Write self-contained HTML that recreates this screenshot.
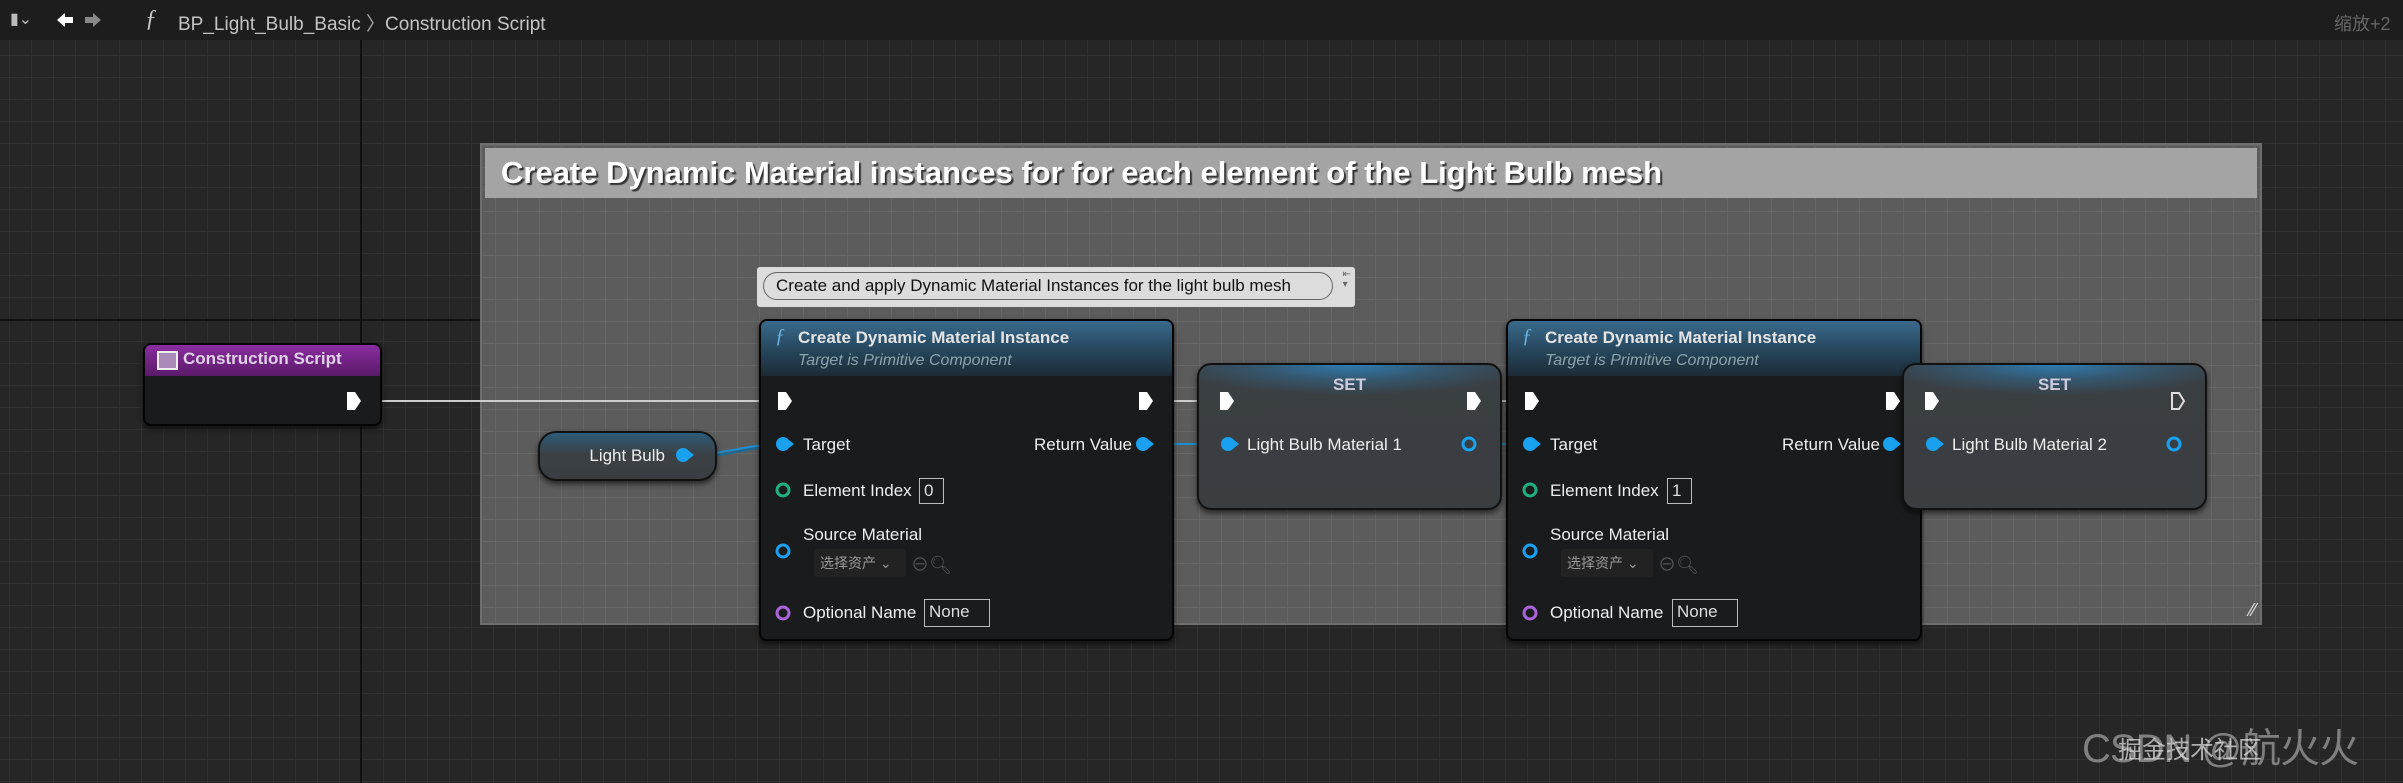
<!DOCTYPE html>
<html><head><meta charset="utf-8"><style>
*{margin:0;padding:0;box-sizing:border-box}
body{width:2403px;height:783px;overflow:hidden;position:relative;font-family:"Liberation Sans","Noto Sans CJK SC",sans-serif;
background-color:#262626;
background-image:linear-gradient(90deg,#303030 1px,transparent 1px),linear-gradient(#303030 1px,transparent 1px);
background-size:22px 22px;background-position:9px 11px}
.abs{position:absolute}
.tb{left:0;top:0;width:2403px;height:40px;background:#1d1d1d;color:#c4c4c4;font-size:19px}
.cm{left:480px;top:143px;width:1782px;height:482px;background-color:#5c5c5c;border:2px solid #6e6e6e;
background-image:linear-gradient(90deg,#666 1px,transparent 1px),linear-gradient(#666 1px,transparent 1px);
background-size:22px 22px;background-position:13px 0}
.cmt{left:3px;top:3px;right:3px;height:50px;background:#a4a4a4;color:#fff;font-weight:bold;font-size:31px;line-height:50px;padding-left:16px;text-shadow:2px 2px 1px #333}
.node{background:#1a1b1c;border:2px solid #050505;border-radius:8px;box-shadow:0 3px 6px rgba(0,0,0,.6);color:#eee;font-size:17px}
.hdr{position:absolute;left:0;top:0;right:0;height:55px;border-radius:6px 6px 0 0;background:linear-gradient(180deg,#3a6a8c 0%,#27485f 50%,#1d2b35 100%)}
.t{position:absolute;white-space:nowrap}
.box{position:absolute;border:1.5px solid #bbb;color:#ddd;font-size:17px;padding-left:4px;line-height:24px}
.set{background:radial-gradient(ellipse 60% 30px at 50% 0,#2e7bb0 0%,rgba(46,123,176,.4) 50%,transparent 100%),linear-gradient(180deg,#3a3f43,#3a3e41);border:2px solid #111;border-radius:14px;box-shadow:0 3px 6px rgba(0,0,0,.6);color:#eee;font-size:17px}
</style></head><body>
<div class="abs tb">
 <div class="t" style="left:10px;top:9px;color:#bbb;font-size:16px">▮⌄</div>
 <svg class="abs" style="left:55px;top:10px" width="90" height="20">
  <path d="M2 10 L10 3 V7 H18 V13 H10 V17 Z" fill="#fff"/>
  <path d="M46 10 L38 3 V7 H30 V13 H38 V17 Z" fill="#888"/>
 </svg>
 <div class="t" style="left:145px;top:6px;font-style:italic;font-family:'Liberation Serif',serif;font-size:24px">ƒ</div>
 <div class="t" style="left:178px;top:9px">BP_Light_Bulb_Basic <span style="color:#aaa">〉</span>Construction Script</div>
 <div class="t" style="left:2334px;top:10px;color:#666;font-size:18px">缩放+2</div>
</div>
<div class="abs" style="left:0;top:319px;width:2403px;height:2px;background:#111"></div>
<div class="abs" style="left:360px;top:40px;width:2px;height:743px;background:#111"></div>

<div class="abs cm"><div class="abs cmt">Create Dynamic Material instances for for each element of the Light Bulb mesh</div>
<div class="t" style="right:4px;bottom:2px;color:#ddd;font-size:18px">⁄⁄</div></div>

<svg class="abs" style="left:0;top:0" width="2403" height="783">
<g fill="none" stroke-width="2">
<path d="M360 401 H783" stroke="#ccc"/>
<path d="M1150 401 H1226 M1478 401 H1530" stroke="#ccc"/>
<path d="M690 455 C720 455 750 444 783 444" stroke="#1a8fd0"/>
<path d="M690 458 C720 458 750 446 783 446" stroke="#156a9a"/>
<path d="M1150 444 H1228 M1476 444 H1530 M1888 444 H1908" stroke="#1a8fd0"/>
</g></svg>

<div class="abs node" style="left:143px;top:343px;width:239px;height:83px">
 <div style="position:absolute;left:0;top:0;right:0;height:31px;border-radius:6px 6px 0 0;background:linear-gradient(180deg,#8a2ea0,#5a1a68)"></div>
 <div style="position:absolute;left:12px;top:6px;width:21px;height:19px;background:#aa8ab8;border:2px solid #eee"></div>
 <div class="t" style="left:38px;top:4px;font-weight:bold;font-size:17px;color:#e0d0e8">Construction Script</div>
</div>

<div class="abs set" style="left:538px;top:431px;width:179px;height:50px;border-radius:18px;background:linear-gradient(180deg,#2e5c7a,#3a4145 45%,#3a3e41)">
 <div class="t" style="right:50px;top:13px">Light Bulb</div>
</div>

<div class="abs" style="left:757px;top:267px;width:598px;height:40px;background:#dcdcdc;border-radius:3px">
 <div class="t" style="left:6px;top:5px;height:28px;width:570px;border:1.5px solid #666;border-radius:14px;color:#111;font-size:17px;line-height:25px;padding-left:12px">Create and apply Dynamic Material Instances for the light bulb mesh</div>
 <div class="t" style="right:4px;top:3px;color:#666;font-size:10px;line-height:10px">⇤<br>▾</div>
</div>

<!-- CDMI 1 -->
<div class="abs node" style="left:759px;top:319px;width:415px;height:322px">
 <div class="hdr"></div>
 <div class="t" style="left:14px;top:4px;color:#6ab0e0;font-style:italic;font-family:'Liberation Serif',serif;font-size:20px">ƒ</div>
 <div class="t" style="left:37px;top:7px;font-weight:bold;font-size:17px;color:#e4e4e4">Create Dynamic Material Instance</div>
 <div class="t" style="left:37px;top:31px;font-style:italic;font-size:16px;color:#8aa3ab">Target is Primitive Component</div>
 <div class="t" style="left:42px;top:114px">Target</div>
 <div class="t" style="right:40px;top:114px">Return Value</div>
 <div class="t" style="left:42px;top:160px">Element Index</div>
 <div class="box" style="left:158px;top:157px;width:25px;height:26px">0</div>
 <div class="t" style="left:42px;top:204px">Source Material</div>
 <div class="t" style="left:53px;top:228px;width:92px;height:28px;background:#222;border-radius:3px;color:#999;font-size:14px;line-height:28px;padding-left:6px">选择资产 ⌄</div>
 <div class="t" style="left:150px;top:230px;color:#555;font-size:18px">⊖🔍︎</div>
 <div class="t" style="left:42px;top:282px">Optional Name</div>
 <div class="box" style="left:163px;top:278px;width:66px;height:28px">None</div>
</div>

<!-- CDMI 2 -->
<div class="abs node" style="left:1506px;top:319px;width:416px;height:322px">
 <div class="hdr"></div>
 <div class="t" style="left:14px;top:4px;color:#6ab0e0;font-style:italic;font-family:'Liberation Serif',serif;font-size:20px">ƒ</div>
 <div class="t" style="left:37px;top:7px;font-weight:bold;font-size:17px;color:#e4e4e4">Create Dynamic Material Instance</div>
 <div class="t" style="left:37px;top:31px;font-style:italic;font-size:16px;color:#8aa3ab">Target is Primitive Component</div>
 <div class="t" style="left:42px;top:114px">Target</div>
 <div class="t" style="right:40px;top:114px">Return Value</div>
 <div class="t" style="left:42px;top:160px">Element Index</div>
 <div class="box" style="left:159px;top:157px;width:25px;height:26px">1</div>
 <div class="t" style="left:42px;top:204px">Source Material</div>
 <div class="t" style="left:53px;top:228px;width:92px;height:28px;background:#222;border-radius:3px;color:#999;font-size:14px;line-height:28px;padding-left:6px">选择资产 ⌄</div>
 <div class="t" style="left:150px;top:230px;color:#555;font-size:18px">⊖🔍︎</div>
 <div class="t" style="left:42px;top:282px">Optional Name</div>
 <div class="box" style="left:164px;top:278px;width:66px;height:28px">None</div>
</div>

<div class="abs set" style="left:1197px;top:363px;width:305px;height:147px">
 <div class="t" style="left:0;right:0;top:10px;text-align:center;font-weight:bold;color:#ccd">SET</div>
 <div class="t" style="left:48px;top:70px">Light Bulb Material 1</div>
</div>
<div class="abs set" style="left:1902px;top:363px;width:305px;height:147px">
 <div class="t" style="left:0;right:0;top:10px;text-align:center;font-weight:bold;color:#ccd">SET</div>
 <div class="t" style="left:48px;top:70px">Light Bulb Material 2</div>
</div>

<svg class="abs" style="left:0;top:0" width="2403" height="783">
<defs>
<g id="ex"><path d="M-7 -9 H1 L7 0 L1 9 H-7 Z" fill="#fff"/></g>
<g id="exo"><path d="M-6 -8 H1 L6 0 L1 8 H-6 Z" fill="none" stroke="#ddd" stroke-width="2"/></g>
</defs>
<use href="#ex" x="354" y="401"/>
<use href="#ex" x="785" y="401"/><use href="#ex" x="1146" y="401"/>
<use href="#ex" x="1532" y="401"/><use href="#ex" x="1893" y="401"/>
<use href="#ex" x="1227" y="401"/><use href="#ex" x="1474" y="401"/>
<use href="#ex" x="1932" y="401"/><use href="#exo" x="2178" y="401"/>
<g fill="#19a0ee">
<circle cx="683" cy="455" r="7"/><path d="M689 451 L694 455 L689 459Z"/>
<circle cx="783" cy="444" r="7"/><path d="M789 440 L794 444 L789 448Z"/>
<circle cx="1143" cy="444" r="7"/><path d="M1149 440 L1154 444 L1149 448Z"/>
<circle cx="1530" cy="444" r="7"/><path d="M1536 440 L1541 444 L1536 448Z"/>
<circle cx="1890" cy="444" r="7"/><path d="M1896 440 L1901 444 L1896 448Z"/>
<circle cx="1228" cy="444" r="7"/><path d="M1234 440 L1239 444 L1234 448Z"/>
<circle cx="1933" cy="444" r="7"/><path d="M1939 440 L1944 444 L1939 448Z"/>
</g>
<g fill="none" stroke-width="3">
<circle cx="1469" cy="444" r="6" stroke="#19a0ee"/><circle cx="2174" cy="444" r="6" stroke="#19a0ee"/>
<circle cx="783" cy="490" r="6" stroke="#1fb07e"/><circle cx="1530" cy="490" r="6" stroke="#1fb07e"/>
<circle cx="783" cy="551" r="6" stroke="#19a0ee"/><circle cx="1530" cy="551" r="6" stroke="#19a0ee"/>
<circle cx="783" cy="613" r="6" stroke="#a864d8"/><circle cx="1530" cy="613" r="6" stroke="#a864d8"/>
</g>
</svg>

<div class="t" style="left:2082px;top:716px;color:rgba(200,200,200,.55);font-size:40px;letter-spacing:-1px">CSDN @航火火</div>
<div class="t" style="left:2118px;top:730px;color:rgba(230,230,230,.7);font-size:24px">掘金技术社区</div>
</body></html>
